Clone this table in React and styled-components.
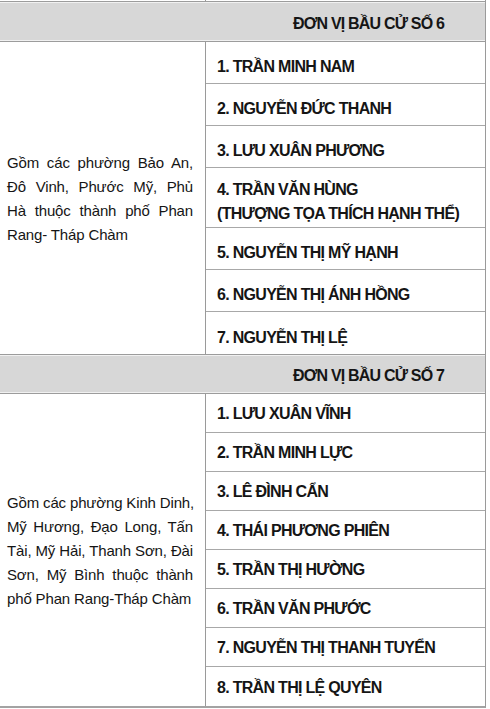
import React from "react";
import styled, { createGlobalStyle } from "styled-components";

const GlobalStyle = createGlobalStyle`
  html, body {
    margin: 0;
    padding: 0;
    background: #fff;
  }
  body {
    font-family: "Liberation Sans", Arial, sans-serif;
    color: #151515;
  }
`;

const sections = [
  {
    title: "ĐƠN VỊ BẦU CỬ SỐ 6",
    headerHeight: 39,
    rowHeight: 42,
    rowPad: 9,
    area: [
      "Gồm các phường Bảo An,",
      "Đô Vinh, Phước Mỹ, Phủ",
      "Hà thuộc thành phố Phan",
      "Rang- Tháp Chàm",
    ],
    names: [
      ["1. TRẦN MINH NAM"],
      ["2. NGUYỄN ĐỨC THANH"],
      ["3. LƯU XUÂN PHƯƠNG"],
      ["4. TRẦN VĂN HÙNG", "(THƯỢNG TỌA THÍCH HẠNH THỂ)"],
      ["5. NGUYỄN THỊ MỸ HẠNH"],
      ["6. NGUYỄN THỊ ÁNH HỒNG"],
      ["7. NGUYỄN THỊ LỆ"],
    ],
  },
  {
    title: "ĐƠN VỊ BẦU CỬ SỐ 7",
    headerHeight: 38,
    rowHeight: 39,
    rowPad: 2,
    area: [
      "Gồm các phường Kinh Dinh,",
      "Mỹ Hương, Đạo Long, Tấn",
      "Tài, Mỹ Hải, Thanh Sơn, Đài",
      "Sơn, Mỹ Bình thuộc thành",
      "phố Phan Rang-Tháp Chàm",
    ],
    names: [
      ["1. LƯU XUÂN VĨNH"],
      ["2. TRẦN MINH LỰC"],
      ["3. LÊ ĐÌNH CẨN"],
      ["4. THÁI PHƯƠNG PHIÊN"],
      ["5. TRẦN THỊ HƯỜNG"],
      ["6. TRẦN VĂN PHƯỚC"],
      ["7. NGUYỄN THỊ THANH TUYỂN"],
      ["8. TRẦN THỊ LỆ QUYÊN"],
    ],
  },
];

const Table = styled.div`
  width: 486px;
  border-right: 1px solid #9a9a9a;
  box-sizing: border-box;
  border-bottom: 2px solid #a3a3a3;
`;

const TopStrip = styled.div`
  display: grid;
  grid-template-columns: 206px 1fr;
  height: 1px;
`;

const StripCell = styled.div`
  border-right: 1px solid #9a9a9a;
`;

const Header = styled.div`
  display: flex;
  align-items: center;
  justify-content: center;
  height: ${(p) => p.$h}px;
  padding-left: 252px;
  background: #d7d7d7;
  border-top: 1px solid #9c9c9c;
  border-bottom: 1px solid #9c9c9c;
  box-shadow: inset 0 1px 0 #f1f1f1, inset 0 -1px 0 #f1f1f1;
  box-sizing: content-box;
`;

const HeaderTitle = styled.span`
  font-weight: 700;
  font-size: 16px;
  letter-spacing: -0.8px;
  white-space: nowrap;
  padding-top: 4px;
`;

const Body = styled.div`
  display: grid;
  grid-template-columns: 206px 1fr;
`;

const AreaCell = styled.div`
  display: flex;
  flex-direction: column;
  justify-content: center;
  padding: 2px 12px 0 7px;
  border-right: 1px solid #9a9a9a;
`;

const AreaLine = styled.div`
  font-size: 15px;
  line-height: 24px;
  letter-spacing: -0.15px;
  white-space: nowrap;
  text-align: ${(p) => (p.$last ? "left" : "justify")};
  text-align-last: ${(p) => (p.$last ? "left" : "justify")};
`;

const NameList = styled.div`
  display: flex;
  flex-direction: column;
`;

const NameRow = styled.div`
  display: flex;
  flex-direction: column;
  justify-content: center;
  min-height: ${(p) => p.$h}px;
  padding: ${(p) => p.$pad}px 0 0 11px;
  box-sizing: border-box;
  border-bottom: ${(p) => (p.$last ? "none" : "1px solid #a8a8a8")};
  font-weight: 700;
  font-size: 16px;
  line-height: 24px;
  letter-spacing: -0.7px;
  white-space: nowrap;
`;

export default function App() {
  return (
    <>
      <GlobalStyle />
      <Table>
        <TopStrip>
          <StripCell />
          <div />
        </TopStrip>
        {sections.map((s) => (
          <section key={s.title}>
            <Header $h={s.headerHeight}>
              <HeaderTitle>{s.title}</HeaderTitle>
            </Header>
            <Body>
              <AreaCell>
                {s.area.map((line, i) => (
                  <AreaLine key={i} $last={i === s.area.length - 1}>
                    {line}
                  </AreaLine>
                ))}
              </AreaCell>
              <NameList>
                {s.names.map((lines, i) => (
                  <NameRow
                    key={i}
                    $h={lines.length > 1 ? 60 : s.rowHeight}
                    $pad={s.rowPad}
                    $last={i === s.names.length - 1}
                  >
                    {lines.map((l) => (
                      <span key={l}>{l}</span>
                    ))}
                  </NameRow>
                ))}
              </NameList>
            </Body>
          </section>
        ))}
      </Table>
    </>
  );
}
